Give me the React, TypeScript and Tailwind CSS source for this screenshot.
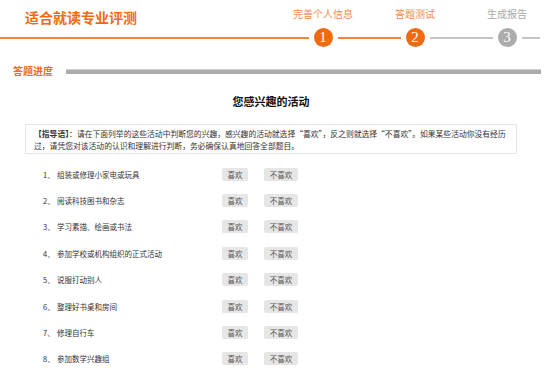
import React from 'react'

const items = [
  '组装或修理小家电或玩具',
  '阅读科技图书和杂志',
  '学习素描、绘画或书法',
  '参加学校或机构组织的正式活动',
  '说服打动别人',
  '整理好书桌和房间',
  '修理自行车',
  '参加数学兴趣组',
]

const steps = [
  { label: '完善个人信息', n: 1, active: true, leftOn: true, rightOn: true },
  { label: '答题测试', n: 2, active: true, leftOn: true, rightOn: false },
  { label: '生成报告', n: 3, active: false, leftOn: false, rightOn: false },
]

export default function App() {
  return (
    <div
      className="w-[550px] h-[374px] overflow-hidden bg-white"
      style={{ fontFamily: '"Noto Sans CJK SC", "Liberation Sans", sans-serif' }}
    >
      {/* Header */}
      <header className="flex h-[47px]">
        <div className="flex-1 flex flex-col">
          <div className="h-[28px] pl-[25px] pt-[9px] text-[14px] leading-[16px] font-bold text-[#f26a10]">
            适合就读专业评测
          </div>
          <div className="h-[19px] flex items-center">
            <div className="h-[2px] w-full bg-[#f5843a]" />
          </div>
        </div>

        {steps.map((s, i) => (
          <div key={s.n} className={i === 2 ? 'w-[89px] flex flex-col' : 'w-[92px] flex flex-col'}>
            <div
              className={
                'h-[28px] pt-[8px] w-[92px] text-center text-[10px] leading-[12px] ' +
                (s.active ? 'text-[#f58a4a]' : 'text-[#a8a8a8]')
              }
            >
              {s.label}
            </div>
            <div className="h-[19px] flex items-center">
              <div className={'h-[2px] w-[31.5px] ' + (s.leftOn ? 'bg-[#f5843a]' : 'bg-[#c4c4c4]')} />
              <div
                className={
                  'mx-[5px] w-[19px] h-[19px] rounded-full flex items-center justify-center text-white text-[15px] leading-none ' +
                  (s.active ? 'bg-[#f26a10]' : 'bg-[#acacac]')
                }
                style={{ fontFamily: '"Liberation Serif", serif' }}
              >
                {s.n}
              </div>
              <div
                className={
                  (i === 2 ? 'w-[18px] ' : 'w-[31.5px] ') +
                  'h-[2px] ' +
                  (s.rightOn ? 'bg-[#f5843a]' : 'bg-[#c4c4c4]')
                }
              />
            </div>
          </div>
        ))}
      </header>

      {/* Progress */}
      <div className="mt-[18px] h-[12px] flex items-center">
        <span className="pl-[13px] text-[10px] leading-[12px] font-bold text-[#f26a10]">答题进度</span>
        <div className="ml-[13px] mr-[9px] flex-1 h-[5px] bg-[#acacac] border-t border-[#d0d0d0]" />
      </div>

      <div className="ml-[25px] w-[492px]">
        <h2 className="mt-[19px] h-[11px] text-center text-[11px] leading-[11px] font-bold text-[#111]">
          您感兴趣的活动
        </h2>

        <div className="mt-[17px] h-[30px] border border-[#e6e6e6] px-[8px] pt-[3px] text-[7.8px] leading-[11.5px] text-[#333] whitespace-nowrap">
          <b>【指导语】</b>：请在下面列举的这些活动中判断您的兴趣，感兴趣的活动就选择“喜欢”，反之则就选择“不喜欢”。如果某些活动你没有经历
          <br />
          过，请凭您对该活动的认识和理解进行判断，务必确保认真地回答全部题目。
        </div>

        <ul className="mt-[7px]">
          {items.map((t, i) => (
            <li key={i} className="h-[26.4px] flex items-center text-[7.5px] text-[#333]">
              <span className="pl-[18px] w-[32px]">{i + 1}、</span>
              <span className="w-[165px]">{t}</span>
              <button className="w-[26px] h-[13px] rounded-[2px] bg-[#e6e6e6] text-[#555] text-[7.5px] leading-[13px]">
                喜欢
              </button>
              <button className="ml-[16px] w-[34px] h-[13px] rounded-[2px] bg-[#e6e6e6] text-[#555] text-[7.5px] leading-[13px]">
                不喜欢
              </button>
            </li>
          ))}
        </ul>
      </div>
    </div>
  )
}
